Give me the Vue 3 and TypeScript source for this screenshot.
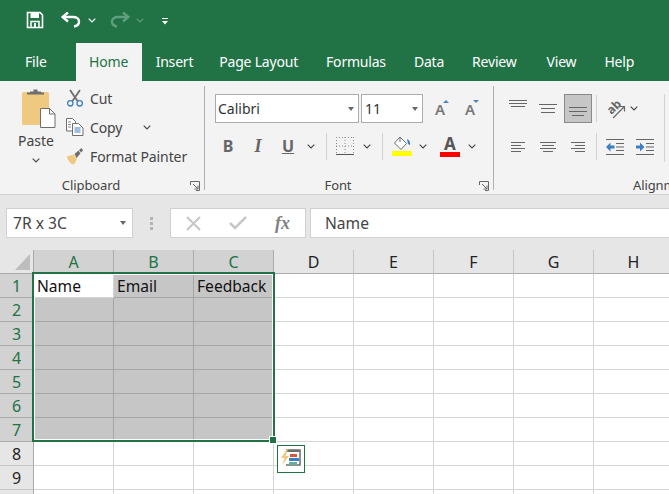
<script setup lang="ts">
const tabs = ['File', 'Home', 'Insert', 'Page Layout', 'Formulas', 'Data', 'Review', 'View', 'Help']
const columns = ['A', 'B', 'C', 'D', 'E', 'F', 'G', 'H']
const rowNumbers = [1, 2, 3, 4, 5, 6, 7, 8, 9, 10]
const headerRow = ['Name', 'Email', 'Feedback']

const isSelected = (row: number, col: number) => row <= 7 && col < 3
const cellText = (row: number, col: number) => (row === 1 ? headerRow[col] ?? '' : '')
</script>

<template>
  <div class="excel">
    <header class="titlebar">
      <svg class="qat-save" width="18" height="18" viewBox="0 0 18 18">
        <path d="M1.5 1.5h12.5l2.5 2.5v12.5h-15z" fill="none" stroke="#fff" stroke-width="1.6" />
        <rect x="4.5" y="2" width="8.5" height="5" fill="#fff" />
        <path d="M5 16v-5.5h8V16" fill="none" stroke="#fff" stroke-width="1.5" />
        <rect x="8" y="12" width="2" height="4" fill="#fff" />
      </svg>
      <svg class="qat-undo" width="20" height="16" viewBox="0 0 20 16">
        <path d="M2 5h10c3.500 0 6 1.800 6 4.500S16 14 13 14.500" fill="none" stroke="#fff" stroke-width="2.400" />
        <path d="M7 .5L1.500 5 7 9.500" fill="none" stroke="#fff" stroke-width="2.400" />
      </svg>
      <svg class="qat-chev" width="8" height="5" viewBox="0 0 8 5"><path d="M.7.7L4 4l3.300-3.300" fill="none" stroke="#fff" stroke-width="1.200" /></svg>
      <svg class="qat-redo" width="20" height="16" viewBox="0 0 20 16">
        <path d="M18 5H8C4.500 5 2 6.800 2 9.500S4 14 7 14.500" fill="none" stroke="#5f9e7e" stroke-width="2.400" />
        <path d="M13 .5L18.500 5 13 9.500" fill="none" stroke="#5f9e7e" stroke-width="2.400" />
      </svg>
      <svg class="qat-chev dim" width="8" height="5" viewBox="0 0 8 5"><path d="M.7.7L4 4l3.300-3.300" fill="none" stroke="#5f9e7e" stroke-width="1.200" /></svg>
      <svg class="qat-more" width="6" height="7" viewBox="0 0 6 7"><path d="M0 0h6v1H0zM0 3h6L3 6.500z" fill="#fff" /></svg>
    </header>

    <nav class="tabs">
      <span v-for="tab in tabs" :key="tab" class="tab" :class="[tab.replace(' ', '-').toLowerCase(), { active: tab === 'Home' }]">{{ tab }}</span>
    </nav>

    <section class="ribbon">
      <div class="group clipboard">
        <div class="group-body clip-body">
          <div class="paste">
            <svg class="paste-icon" width="36" height="40" viewBox="0 0 36 40">
              <rect x="1" y="3" width="27" height="33" rx="1.500" fill="#efc97f" />
              <path d="M9 5V2.500h3.500V.5h4v2H20V5z" fill="#6e6e6e" />
              <rect x="6" y="3.500" width="17" height="2" fill="#6e6e6e" />
              <path d="M19.500 19.500h9l5.500 5.500v13.500H19.500z" fill="#fff" stroke="#6e6e6e" />
              <path d="M28.500 19.500V25H34" fill="none" stroke="#6e6e6e" />
            </svg>
            <span>Paste</span>
            <svg class="paste-chev" width="8" height="5" viewBox="0 0 8 5"><path d="M.7.7L4 4l3.300-3.300" fill="none" stroke="#444" stroke-width="1.100" /></svg>
          </div>
          <div class="clip-actions">
            <div class="clip-row">
              <svg width="18" height="18" viewBox="0 0 18 18">
                <path d="M4 1l7.500 11M14 1L6.500 12" stroke="#6e6e6e" stroke-width="1.800" fill="none" />
                <circle cx="4.300" cy="14.300" r="2.700" fill="none" stroke="#3f7fc1" stroke-width="1.300" />
                <circle cx="13.700" cy="14.300" r="2.700" fill="none" stroke="#3f7fc1" stroke-width="1.300" />
              </svg>
              <span>Cut</span>
            </div>
            <div class="clip-row">
              <svg width="18" height="18" viewBox="0 0 18 18">
                <path d="M.5.500h6l3 3V13H.5z" fill="#fff" stroke="#6e6e6e" />
                <path d="M6.500 5.500h6l4.500 4.500v7.500H6.500z" fill="#fff" stroke="#6e6e6e" />
                <path d="M8.500 10h6M8.500 12h6M8.500 14h6" stroke="#3f7fc1" />
                <path d="M2 4h3M2 6.500h3M2 9h3" stroke="#8a8a8a" />
              </svg>
              <span>Copy</span>
              <svg class="copy-chev" width="8" height="5" viewBox="0 0 8 5"><path d="M.7.700L4 4l3.300-3.300" fill="none" stroke="#444" stroke-width="1.100" /></svg>
            </div>
            <div class="clip-row">
              <svg width="18" height="18" viewBox="0 0 18 18">
                <path d="M1 9.500l6.500-2 3.500 4.500-3 5.500c-3 0-6-3.500-7-8z" fill="#efc97f" />
                <path d="M8.500 7l4-3.500 2 3-4 4.500z" fill="#6e6e6e" />
                <path d="M13 3l2.500-2 1.500 2.500-2 2z" fill="#6e6e6e" />
              </svg>
              <span>Format Painter</span>
            </div>
          </div>
        </div>
        <div class="group-label">
          <span>Clipboard</span>
          <svg class="launcher" width="10" height="10" viewBox="0 0 10 10"><path d="M.5 4V.500H9.500V9.500H6M3 3l5 5M4.500 8H8V4.500" fill="none" stroke="#666" /></svg>
        </div>
      </div>

      <div class="group font">
        <div class="group-body font-body">
          <div class="font-top">
            <div class="combo family"><span>Calibri</span><i class="caret" /></div>
            <div class="combo size"><span>11</span><i class="caret" /></div>
            <div class="grow-btn">
              <span class="big-a">A</span>
              <svg class="tri" width="6" height="3" viewBox="0 0 6 3"><path d="M0 3l3-3 3 3z" fill="#4a86c5" /></svg>
            </div>
            <div class="grow-btn shrink">
              <span class="big-a">A</span>
              <svg class="tri" width="6" height="3" viewBox="0 0 6 3"><path d="M0 0l3 3 3-3z" fill="#4a86c5" /></svg>
            </div>
          </div>
          <div class="font-bottom">
            <b class="fmt">B</b>
            <i class="fmt italic">I</i>
            <span class="fmt under">U</span>
            <svg class="chev c-u" width="8" height="5" viewBox="0 0 8 5"><path d="M.7.700L4 4l3.300-3.300" fill="none" stroke="#444" stroke-width="1.100" /></svg>
            <i class="vsep s-a" />
            <svg class="borders" width="18" height="18" viewBox="0 0 18 18">
              <path d="M.5 0v17M9 0v17M17.500 0v17M0 .500h18M0 9h18" stroke="#8a8a8a" stroke-dasharray="1 2" fill="none" />
              <path d="M0 17.500h18" stroke="#555" />
            </svg>
            <svg class="chev c-b" width="8" height="5" viewBox="0 0 8 5"><path d="M.7.700L4 4l3.300-3.300" fill="none" stroke="#444" stroke-width="1.100" /></svg>
            <i class="vsep s-b" />
            <div class="swatch-btn fill">
              <svg width="20" height="15" viewBox="0 0 20 15">
                <path d="M8 1l6.500 6.500L9 13.500 2.500 7z" fill="#fff" stroke="#6e6e6e" />
                <path d="M8 1v5" stroke="#6e6e6e" />
                <path d="M15 3c2.500 1 3.500 3 3 6l-2-1z" fill="#3f7fc1" />
              </svg>
              <i class="bar yellow" />
            </div>
            <svg class="chev c-f" width="8" height="5" viewBox="0 0 8 5"><path d="M.7.700L4 4l3.300-3.300" fill="none" stroke="#444" stroke-width="1.100" /></svg>
            <div class="swatch-btn color">
              <span class="color-a">A</span>
              <i class="bar red" />
            </div>
            <svg class="chev c-c" width="8" height="5" viewBox="0 0 8 5"><path d="M.7.700L4 4l3.300-3.300" fill="none" stroke="#444" stroke-width="1.100" /></svg>
          </div>
        </div>
        <div class="group-label">
          <span>Font</span>
          <svg class="launcher" width="10" height="10" viewBox="0 0 10 10"><path d="M.5 4V.500H9.500V9.500H6M3 3l5 5M4.500 8H8V4.500" fill="none" stroke="#666" /></svg>
        </div>
      </div>

      <div class="group align">
        <div class="group-body align-body">
          <div class="align-top">
            <div class="al-btn top"><svg width="18" height="8" viewBox="0 0 18 8"><path d="M0 .500h18M0 3.500h18M2 6.500h14" stroke="#666" /></svg></div>
            <div class="al-btn"><svg width="18" height="10" viewBox="0 0 18 10"><path d="M0 .500h18M2 4.500h14M2 8.500h14" stroke="#666" /></svg></div>
            <div class="al-btn on"><svg width="18" height="10" viewBox="0 0 18 10"><path d="M0 .500h18M0 4.500h18M3 8.500h12" stroke="#666" /></svg></div>
            <i class="vsep2" />
            <svg class="orient" width="22" height="22" viewBox="0 0 22 22">
              <text x="3" y="14" transform="rotate(-45 9 10)" class="ab">ab</text>
              <path d="M9 20L20 9M15.500 8.500H20.500V13.500" fill="none" stroke="#666" stroke-width="1.200" />
            </svg>
            <svg class="orient-chev" width="8" height="5" viewBox="0 0 8 5"><path d="M.7.700L4 4l3.300-3.300" fill="none" stroke="#444" stroke-width="1.100" /></svg>
          </div>
          <div class="align-bottom">
            <div class="al-btn"><svg width="14" height="10" viewBox="0 0 14 10"><path d="M0 .500h14M0 3.500h10M0 6.500h14M0 9.500h10" stroke="#666" /></svg></div>
            <div class="al-btn"><svg width="16" height="10" viewBox="0 0 16 10"><path d="M0 .500h16M2 3.500h12M0 6.500h16M3 9.500h10" stroke="#666" /></svg></div>
            <div class="al-btn"><svg width="14" height="10" viewBox="0 0 14 10"><path d="M0 .500h14M4 3.500h10M0 6.500h14M4 9.500h10" stroke="#666" /></svg></div>
            <i class="vsep2 wide" />
            <svg class="indent" width="18" height="16" viewBox="0 0 18 16">
              <path d="M0 .500h18M10 4.500h8M10 8h8M10 11.500h8M0 15.500h18" stroke="#666" />
              <path d="M0 8l4.500-4.500V6.500H8.500v3H4.500v3z" fill="#3f7fc1" />
            </svg>
            <svg class="indent" width="18" height="16" viewBox="0 0 18 16">
              <path d="M0 .500h18M10 4.500h8M10 8h8M10 11.500h8M0 15.500h18" stroke="#666" />
              <path d="M8.500 8L4 3.500V6.500H0v3h4v3z" fill="#3f7fc1" />
            </svg>
          </div>
          <i class="align-end" />
        </div>
        <div class="group-label align-label"><span>Alignment</span></div>
      </div>
    </section>

    <section class="formula-bar">
      <div class="name-box"><span>7R x 3C</span><i class="caret" /></div>
      <div class="grip"><i /><i /><i /></div>
      <div class="fx-box">
        <svg width="15" height="15" viewBox="0 0 15 15"><path d="M1 1l13 13M14 1L1 14" stroke="#c6c6c6" stroke-width="2" /></svg>
        <svg width="18" height="14" viewBox="0 0 18 14"><path d="M1 7l5 5L17 1" fill="none" stroke="#c6c6c6" stroke-width="2.500" /></svg>
        <span class="fx">fx</span>
      </div>
      <div class="formula-input">Name</div>
    </section>

    <section class="sheet">
      <div class="grid">
        <div class="corner"><i /></div>
        <div v-for="(col, c) in columns" :key="col" class="col-head" :class="{ sel: c < 3 }">{{ col }}</div>
        <template v-for="row in rowNumbers" :key="row">
          <div class="row-head" :class="{ sel: row <= 7 }">{{ row }}</div>
          <div
            v-for="(col, c) in columns"
            :key="col"
            class="cell"
            :class="{ sel: isSelected(row, c) && !(row === 1 && c === 0) }"
          >{{ cellText(row, c) }}</div>
        </template>
      </div>
      <div class="selection"><i class="handle" /></div>
      <div class="quick">
        <svg width="20" height="20" viewBox="0 0 20 20">
          <path d="M5 1h14v15H5" fill="none" stroke="#6e6e6e" stroke-width="1.500" />
          <rect x="5" y="1" width="14" height="2" fill="#6e6e6e" />
          <rect x="9" y="5" width="7" height="3" fill="#d9573a" />
          <rect x="8" y="9" width="10" height="3" fill="#3f7fc1" />
          <rect x="8" y="13" width="8" height="3" fill="#6bab9a" />
          <path d="M6 0L0 9h3.500L1 16l7-9H4.500L7 0z" fill="#efc97f" />
        </svg>
      </div>
    </section>
  </div>
</template>

<style>
html, body { margin: 0; overflow: hidden; }
</style>

<style scoped>
.excel {
  width: 669px;
  height: 494px;
  overflow: hidden;
  font-family: "Noto Sans", "Open Sans", sans-serif;
  background: #fff;
  color: #444;
}

.titlebar {
  height: 43px;
  background: #217346;
  display: flex;
  align-items: center;
  padding: 0 0 3px 26px;
  box-sizing: border-box;
}
.qat-undo { margin-left: 17px; }
.qat-chev { margin-left: 7px; }
.qat-redo { margin-left: 14px; }
.qat-chev.dim { margin-left: 6px; }
.qat-more { margin-left: 18px; margin-top: 2px; }

.tabs {
  height: 38px;
  background: #217346;
  display: flex;
  padding-left: 11px;
}
.tab {
  color: #fff;
  font-size: 14px;
  line-height: 38px;
  padding: 0 14px;
  letter-spacing: -0.2px;
  white-space: nowrap;
}
.tab.file { margin-right: 15px; }
.tab.active {
  background: #f3f3f3;
  color: #217346;
  padding: 0 13.5px;
}
.tab.insert { margin-right: -2px; }
.tab.review { margin-right: 2px; }

.ribbon {
  height: 114px;
  box-sizing: border-box;
  background: #f3f3f3;
  border-bottom: 1px solid #d2d2d2;
  display: flex;
  padding-top: 5px;
  font-size: 14px;
}
.group {
  height: 104px;
  display: flex;
  flex-direction: column;
  border-right: 1px solid #b0b0b0;
  flex: none;
  position: relative;
}
.group-body { flex: 1; }
.group-label {
  height: 20px;
  font-size: 13px;
  line-height: 20px;
  text-align: center;
  letter-spacing: -0.1px;
  padding-right: 22px;
  margin-top: 5px;
  margin-bottom: -5px;
}
.launcher { position: absolute; right: 4px; bottom: -1px; }

.clipboard { width: 204px; }
.clip-body { display: flex; padding-top: 3px; }
.paste {
  width: 72px;
  display: flex;
  flex-direction: column;
  align-items: center;
  box-sizing: border-box;
}
.paste-icon { margin-left: 6px; }
.paste span { margin-top: 2px; line-height: 20px; }
.paste-chev { margin-top: 7px; }
.clip-actions {
  display: flex;
  flex-direction: column;
  gap: 9px;
  margin-top: -1px;
  margin-left: -6px;
}
.clip-row {
  height: 20px;
  display: flex;
  align-items: center;
  gap: 6px;
  white-space: nowrap;
  letter-spacing: -0.1px;
}
.copy-chev { margin-left: 15px; }

.font { width: 288px; }
.font-body { padding: 8px 0 0 10px; }
.font-top { display: flex; align-items: center; gap: 2px; }
.combo {
  height: 29px;
  box-sizing: border-box;
  border: 1px solid #ababab;
  background: #fff;
  display: flex;
  align-items: center;
  justify-content: space-between;
  padding: 0 4px 0 2px;
  color: #333;
}
.combo.family { width: 144px; }
.combo.size { width: 62px; padding-left: 3px; }
.caret {
  width: 0;
  height: 0;
  border-left: 3.500px solid transparent;
  border-right: 3.500px solid transparent;
  border-top: 4px solid #666;
}
.grow-btn {
  width: 18px;
  height: 29px;
  position: relative;
  margin-left: 6px;
  text-align: center;
}
.grow-btn.shrink { margin-left: 10px; }
.big-a {
  font-size: 15px;
  font-weight: 600;
  color: #777;
  line-height: 31px;
}
.tri { position: absolute; right: 0; top: 6px; }

.font-bottom {
  margin-top: 9px;
  height: 28px;
  display: flex;
  align-items: center;
}
.fmt {
  width: 18px;
  text-align: center;
  font-size: 16px;
  color: #666;
  font-weight: 700;
}
.font-bottom .fmt:first-child { margin-left: 4px; }
.italic { margin-left: 12px; font-family: "Liberation Serif", serif; font-size: 18px; }
.under { margin-left: 12px; text-decoration: underline; }
.chev { flex: none; }
.c-u { margin-left: 10px; }
.vsep {
  display: block;
  width: 1px;
  height: 27px;
  background: #d2d2d2;
}
.s-a { margin-left: 11px; }
.borders { margin-left: 9px; }
.c-b { margin-left: 9px; }
.s-b { margin-left: 11px; }
.swatch-btn {
  width: 22px;
  display: flex;
  flex-direction: column;
  align-items: center;
}
.fill { margin-left: 8px; }
.c-f { margin-left: 6px; }
.color { margin-left: 12px; }
.color-a {
  font-size: 17px;
  font-weight: 700;
  line-height: 17px;
  color: #555;
}
.c-c { margin-left: 7px; }
.bar {
  display: block;
  width: 20px;
  height: 5px;
}
.yellow { background: #ffff00; }
.red { background: #ff0000; }

.align { width: 300px; border-right: 0; }
.align-body { padding: 8px 0 0 9px; position: relative; }
.align-top, .align-bottom { display: flex; align-items: center; height: 29px; }
.align-bottom { margin-top: 9px; }
.al-btn {
  width: 30px;
  height: 29px;
  display: flex;
  align-items: center;
  justify-content: center;
  box-sizing: border-box;
}
.al-btn.on {
  background: #c6c6c6;
  border: 1px solid #8a8a8a;
  width: 28px;
  margin: 0 1px;
  align-items: flex-end;
  padding-bottom: 5px;
}
.al-btn.top { align-items: flex-start; padding-top: 6px; }
.vsep2 {
  display: block;
  width: 1px;
  height: 27px;
  background: #d2d2d2;
  margin: 0 7px 0 3px;
}
.vsep2.wide { margin-right: 9px; }
.orient { flex: none; }
.ab { font-size: 12px; font-weight: 700; fill: #666; }
.orient-chev { margin-left: 4px; }
.indent { margin-right: 12px; flex: none; }
.align-label {
  text-align: left;
  padding: 0 0 0 139px;
  white-space: nowrap;
}
.align-end {
  position: absolute;
  left: 170px;
  top: 8px;
  width: 1px;
  height: 68px;
  background: #d2d2d2;
}

.formula-bar {
  height: 55px;
  background: #e6e6e6;
  display: flex;
  align-items: flex-start;
  padding: 13px 0 0 6px;
  box-sizing: border-box;
  font-size: 15.6px;
  color: #444;
}
.name-box, .fx-box, .formula-input {
  height: 30px;
  box-sizing: border-box;
  background: #fff;
  border: 1px solid #d0d0d0;
  display: flex;
  align-items: center;
}
.name-box {
  width: 127px;
  justify-content: space-between;
  padding: 0 6px 0 6px;
}
.grip {
  width: 37px;
  height: 30px;
  display: flex;
  flex-direction: column;
  align-items: center;
  justify-content: center;
  gap: 2px;
}
.grip i {
  width: 3px;
  height: 3px;
  background: #b4b4b4;
}
.fx-box {
  width: 136px;
  padding-left: 15px;
  gap: 28px;
}
.fx {
  font-family: "Liberation Serif", serif;
  font-style: italic;
  font-weight: 700;
  font-size: 18px;
  color: #808080;
}
.formula-input {
  flex: 1;
  margin-left: 4px;
  padding-left: 14px;
  border-right: 0;
}

.sheet { position: relative; }
.grid {
  display: grid;
  grid-template-columns: 34px repeat(8, 80px);
  grid-auto-rows: 24px;
  font-size: 15.6px;
}
.corner {
  background: #e6e6e6;
  border-right: 1px solid #ababab;
  border-bottom: 1px solid #ababab;
  box-sizing: border-box;
  position: relative;
}
.corner i {
  position: absolute;
  left: 15px;
  top: 4px;
  width: 0;
  height: 0;
  border-left: 15px solid transparent;
  border-bottom: 16px solid #bdbdbd;
}
.col-head, .row-head {
  background: #e6e6e6;
  box-sizing: border-box;
  display: flex;
  align-items: center;
  justify-content: center;
  color: #222;
  font-size: 16px;
  border-right: 1px solid #c6c6c6;
  border-bottom: 1px solid #ababab;
}
.row-head {
  border-right-color: #ababab;
  border-bottom-color: #c6c6c6;
}
.col-head.sel, .row-head.sel {
  background: #d2d2d2;
  color: #217346;
  border-right-color: #ababab;
}
.row-head.sel { border-bottom-color: #ababab; }
.cell {
  box-sizing: border-box;
  border-right: 1px solid #d4d4d4;
  border-bottom: 1px solid #d4d4d4;
  padding-left: 3px;
  line-height: 24px;
  color: #111;
  white-space: nowrap;
}
.cell.sel {
  background: #c6c6c6;
  border-color: #a5a5a5;
}
.selection {
  position: absolute;
  left: 32px;
  top: 22px;
  width: 243px;
  height: 170px;
  box-sizing: border-box;
  border: 2px solid #217346;
  box-shadow: inset 0 0 0 1px #fff;
  pointer-events: none;
}
.handle {
  position: absolute;
  right: -4px;
  bottom: -4px;
  width: 6px;
  height: 6px;
  background: #217346;
  border: 1px solid #fff;
}
.quick {
  position: absolute;
  left: 277px;
  top: 195px;
  width: 28px;
  height: 28px;
  box-sizing: border-box;
  border: 1px solid #217346;
  background: #fff;
  display: flex;
  align-items: center;
  justify-content: center;
}
</style>
